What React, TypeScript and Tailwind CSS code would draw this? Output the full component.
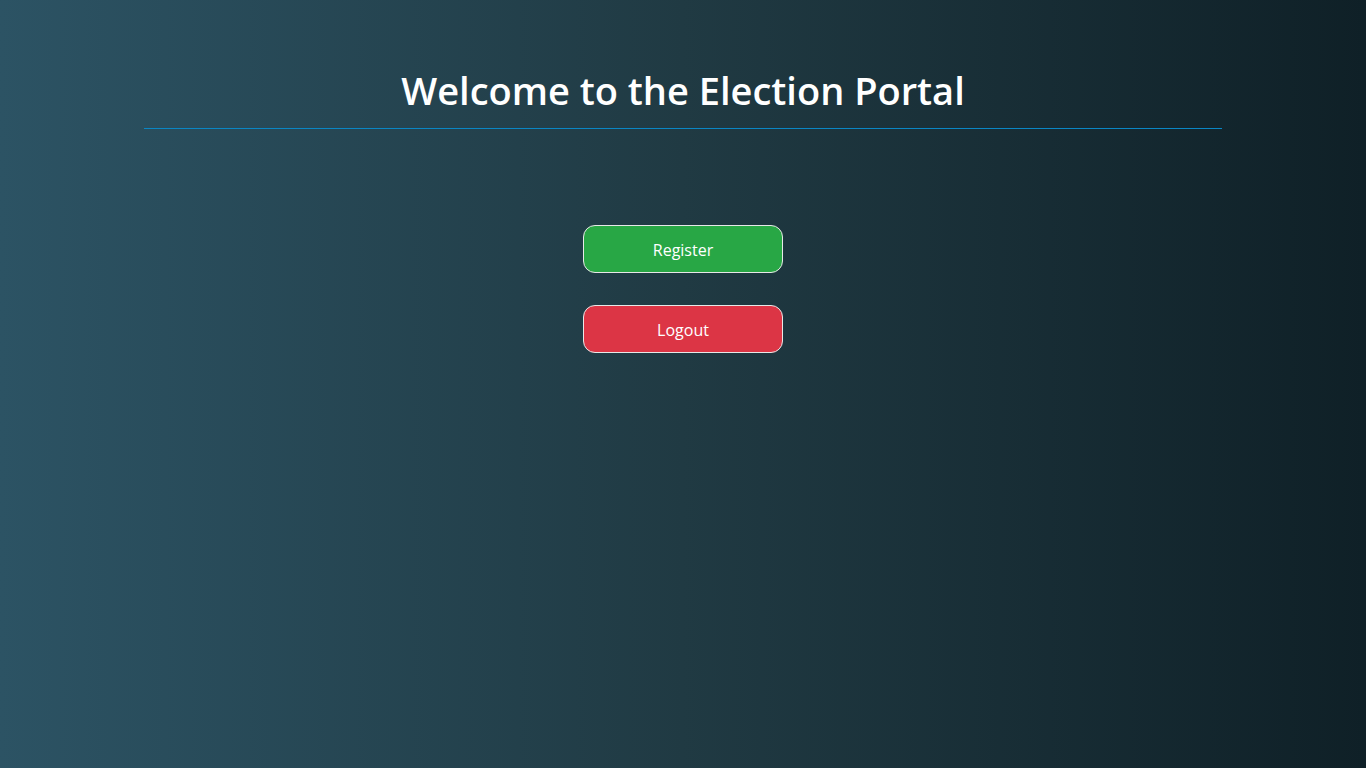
export default function App() {
  return (
    <div
      className="min-h-screen w-full bg-[linear-gradient(to_right,#2c5364,#203a43,#0f2027)] text-white"
      style={{ fontFamily: '"Open Sans", "Noto Sans", sans-serif' }}
    >
      <div className="mx-[144px] pt-[62px]">
        <h1 className="text-center text-[38px] font-semibold leading-[56px] pb-[10px] border-b border-solid border-b-[#0a86c4]">
          Welcome to the Election Portal
        </h1>
      </div>
      <div className="flex flex-col items-center gap-[32px] pt-[96px]">
        <button className="w-[200px] h-[48px] rounded-[12px] border border-[#e8e8e8] bg-[#28a745] text-[16px] pt-[1px] text-white">
          Register
        </button>
        <button className="w-[200px] h-[48px] rounded-[12px] border border-[#e8e8e8] bg-[#dc3545] text-[16px] pt-[1px] text-white">
          Logout
        </button>
      </div>
    </div>
  );
}
